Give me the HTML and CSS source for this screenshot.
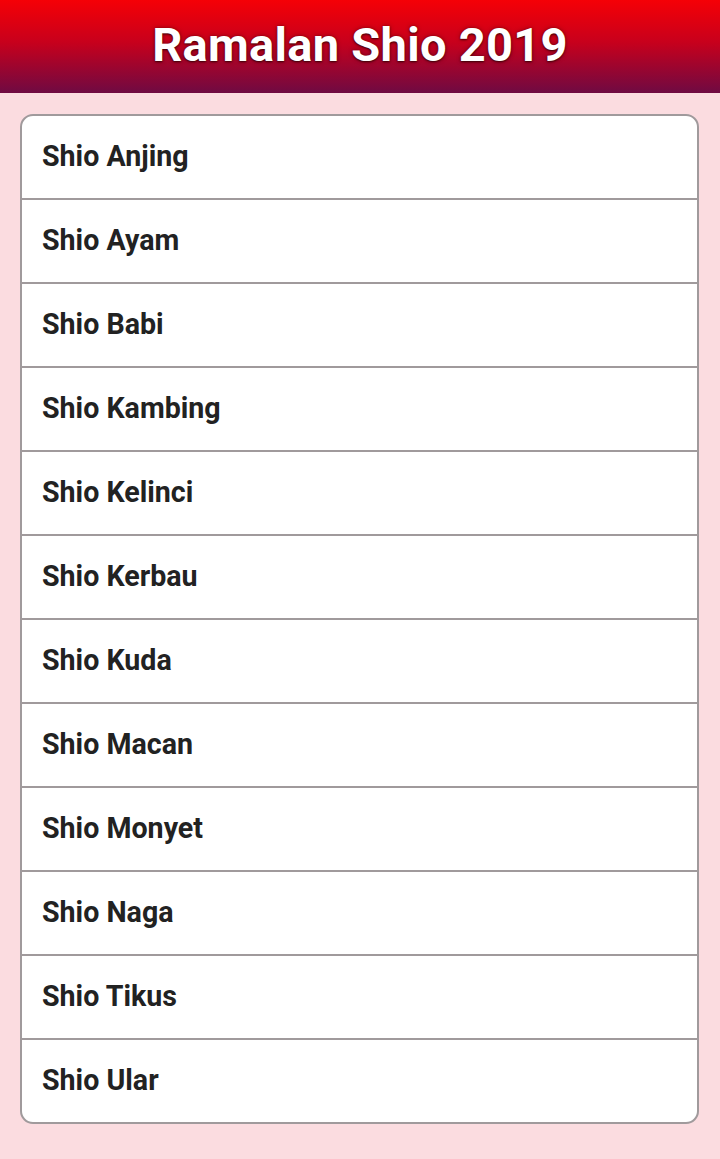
FILE: index.html
```html
<!DOCTYPE html>
<html>
<head>
<meta charset="utf-8">
<link rel="stylesheet" href="styles.css">
</head>
<body>
<header class="appbar"><h1 class="title">Ramalan Shio 2019</h1></header>
<main class="content">
  <ul class="list">
    <li class="item">Shio Anjing</li>
    <li class="item">Shio Ayam</li>
    <li class="item">Shio Babi</li>
    <li class="item">Shio Kambing</li>
    <li class="item">Shio Kelinci</li>
    <li class="item">Shio Kerbau</li>
    <li class="item">Shio Kuda</li>
    <li class="item">Shio Macan</li>
    <li class="item">Shio Monyet</li>
    <li class="item">Shio Naga</li>
    <li class="item">Shio Tikus</li>
    <li class="item">Shio Ular</li>
  </ul>
</main>
</body>
</html>
```
FILE: styles.css
```css
html, body {
  margin: 0;
  padding: 0;
}
body {
  background: #fbdce0;
  font-family: Roboto, "Liberation Sans", sans-serif;
  width: 720px;
  height: 1159px;
  overflow: hidden;
}
.appbar {
  height: 93px;
  box-sizing: border-box;
  padding-bottom: 4px;
  background: linear-gradient(to bottom, #f50006 0%, #c8001c 45%, #6f0a42 100%);
  display: flex;
  align-items: center;
  justify-content: center;
}
.title {
  margin: 0;
  color: #ffffff;
  font-size: 47px;
  font-weight: 700;
  letter-spacing: 0.3px;
  text-shadow: 0 1px 2px rgba(40,0,0,0.8), 0 0 4px rgba(60,0,0,0.5);
  line-height: 1;
}
.content {
  padding: 21px 21px 0 20px;
}
.list {
  list-style: none;
  margin: 0;
  padding: 0;
  background: #ffffff;
  border: 2px solid #a09a9c;
  border-radius: 13px;
  overflow: hidden;
}
.item {
  height: 82px;
  box-sizing: border-box;
  padding-bottom: 2px;
  display: flex;
  align-items: center;
  padding-left: 20px;
  font-size: 28.6px;
  font-weight: 700;
  color: #222222;
  border-top: 2px solid #a09a9c;
}
.item + .item {
  height: 84px;
}
.item:first-child {
  border-top: none;
}
```
